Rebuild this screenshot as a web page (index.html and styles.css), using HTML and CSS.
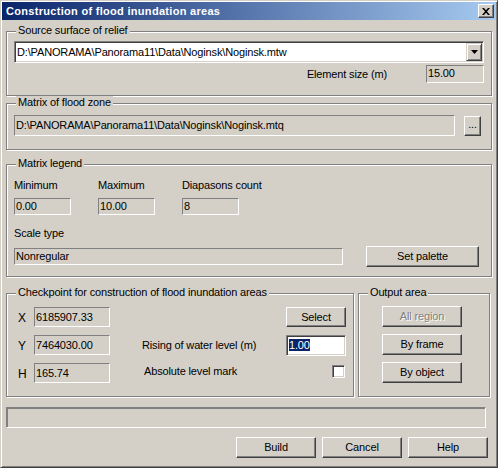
FILE: index.html
```html
<!DOCTYPE html>
<html lang="en">

<head>
    <meta charset="UTF-8">
    <title>Construction of flood inundation areas</title>
    <link rel="stylesheet" href="styles.css">
</head>

<body>
    <div class="window">
        <div class="titlebar">
            <span class="title">Construction of flood inundation areas</span>
            <span class="close-btn">
                <svg width="8" height="7" viewBox="0 0 8 7">
                    <path d="M0 0h2l2 2.2L6 0h2L5 3.5 8 7H6L4 4.8 2 7H0l3-3.5z" fill="#000"/>
                </svg>
            </span>
        </div>

        <div class="content">
            <div class="group g-source">
                <span class="group-label">Source surface of relief</span>
                <div class="combo">
                    <span class="combo-text">D:\PANORAMA\Panorama11\Data\Noginsk\Noginsk.mtw</span>
                    <span class="combo-btn">
                        <svg width="7" height="4" viewBox="0 0 7 4"><path d="M0 0h7L3.5 4z" fill="#000"/></svg>
                    </span>
                </div>
                <div class="size-row">
                    <span>Element size (m)</span>
                    <div class="field f-size">15.00</div>
                </div>
            </div>

            <div class="group g-matrix">
                <span class="group-label">Matrix of flood zone</span>
                <div class="matrix-row">
                    <div class="field f-path">D:\PANORAMA\Panorama11\Data\Noginsk\Noginsk.mtq</div>
                    <div class="btn btn-browse">...</div>
                </div>
            </div>

            <div class="group g-legend">
                <span class="group-label">Matrix legend</span>
                <div class="legend-row">
                    <div class="legend-col">
                        <div class="caption">Minimum</div>
                        <div class="field f-small">0.00</div>
                    </div>
                    <div class="legend-col">
                        <div class="caption">Maximum</div>
                        <div class="field f-small">10.00</div>
                    </div>
                    <div class="legend-col">
                        <div class="caption">Diapasons count</div>
                        <div class="field f-small">8</div>
                    </div>
                </div>
                <div class="caption scale-caption">Scale type</div>
                <div class="scale-row">
                    <div class="field f-scale">Nonregular</div>
                    <div class="btn btn-palette">Set palette</div>
                </div>
            </div>

            <div class="bottom-groups">
                <div class="group g-check">
                    <span class="group-label">Checkpoint for construction of flood inundation areas</span>
                    <div class="check-grid">
                        <span class="axis">X</span>
                        <div class="field f-coord">6185907.33</div>
                        <span></span>
                        <span></span>
                        <div class="btn btn-side">Select</div>

                        <span class="axis">Y</span>
                        <div class="field f-coord">7464030.00</div>
                        <span></span>
                        <span class="check-text">Rising of water level (m)</span>
                        <div class="edit"><span class="selected">1.00</span></div>

                        <span class="axis">H</span>
                        <div class="field f-coord">165.74</div>
                        <span></span>
                        <span class="check-text abs-text">Absolute level mark</span>
                        <span class="checkbox"></span>
                    </div>
                </div>

                <div class="group g-output">
                    <span class="group-label">Output area</span>
                    <div class="output-buttons">
                        <div class="btn btn-output disabled">All region</div>
                        <div class="btn btn-output">By frame</div>
                        <div class="btn btn-output">By object</div>
                    </div>
                </div>
            </div>

            <div class="status"></div>

            <div class="actions">
                <div class="btn btn-action">Build</div>
                <div class="btn btn-action">Cancel</div>
                <div class="btn btn-action">Help</div>
            </div>
        </div>
    </div>
</body>

</html>
```

FILE: styles.css
```css
body {
    margin: 0;
    font-family: "Liberation Sans", Arial, sans-serif;
    font-size: 11px;
    line-height: 13px;
    letter-spacing: -0.15px;
    color: #000;
    background: #d4d0c8;
}

.window {
    width: 498px;
    height: 468px;
    box-sizing: border-box;
    padding: 1px;
    background: #d4d0c8;
    border: 1px solid;
    border-color: #d4d0c8 #404040 #404040 #d4d0c8;
    box-shadow: inset 1px 1px 0 #fff, inset -1px -1px 0 #808080;
}

.titlebar {
    height: 18px;
    display: flex;
    align-items: center;
    justify-content: space-between;
    padding: 0 2px 0 4px;
    background: linear-gradient(to right, #0a246a, #a6caf0);
}

.title {
    color: #fff;
    font-weight: bold;
    letter-spacing: 0.3px;
}

.close-btn {
    width: 16px;
    height: 14px;
    box-sizing: border-box;
    display: flex;
    align-items: center;
    justify-content: center;
    background: #d4d0c8;
    border: 1px solid;
    border-color: #fff #404040 #404040 #fff;
    box-shadow: inset -1px -1px 0 #808080;
}

.content {
    padding: 0 4px;
}

/* etched group box */
.group {
    position: relative;
    box-sizing: border-box;
    border: 1px solid #808080;
    box-shadow: inset 1px 1px 0 #fff, 1px 1px 0 #fff;
}

.group-label {
    position: absolute;
    left: 9px;
    top: -8px;
    padding: 0 2px;
    background: #d4d0c8;
    white-space: nowrap;
}

/* read-only field, thin sunken */
.field {
    box-sizing: border-box;
    padding: 1px 0 0 1px;
    border: 1px solid;
    border-color: #808080 #fff #fff #808080;
    white-space: nowrap;
    overflow: hidden;
}

.btn {
    box-sizing: border-box;
    display: flex;
    align-items: center;
    justify-content: center;
    background: #d4d0c8;
    border: 1px solid;
    border-color: #fff #404040 #404040 #fff;
    box-shadow: inset -1px -1px 0 #808080;
    white-space: nowrap;
}

.btn.disabled {
    color: #808080;
    text-shadow: 1px 1px 0 #fff;
}

.g-source {
    margin-top: 11px;
    height: 65px;
    padding: 9px 0 0 7px;
}

.combo {
    width: 470px;
    height: 22px;
    box-sizing: border-box;
    display: flex;
    align-items: stretch;
    background: #fff;
    border: 1px solid;
    border-color: #808080 #fff #fff #808080;
    box-shadow: inset 1px 1px 0 #404040, inset -1px -1px 0 #d4d0c8;
    padding: 1px;
}

.combo-text {
    flex: 1;
    padding: 3px 0 0 1px;
}

.combo-btn {
    width: 16px;
    box-sizing: border-box;
    display: flex;
    align-items: center;
    justify-content: center;
    background: #d4d0c8;
    border: 1px solid;
    border-color: #d4d0c8 #404040 #404040 #d4d0c8;
    box-shadow: inset 1px 1px 0 #fff, inset -1px -1px 0 #808080;
}

.size-row {
    width: 470px;
    margin-top: 2px;
    display: flex;
    justify-content: flex-end;
    align-items: center;
    gap: 39px;
}

.f-size {
    width: 58px;
    height: 18px;
}

.g-matrix {
    margin-top: 7px;
    height: 47px;
    padding: 11px 0 0 7px;
}

.matrix-row {
    display: flex;
    align-items: center;
    gap: 9px;
}

.f-path {
    width: 441px;
    height: 21px;
    padding-top: 3px;
}

.btn-browse {
    width: 17px;
    height: 20px;
    padding-bottom: 3px;
}

.g-legend {
    margin-top: 14px;
    height: 113px;
    padding: 14px 0 0 7px;
}

.legend-row {
    display: flex;
}

.legend-col {
    width: 84px;
}

.caption {
    height: 13px;
}

.f-small {
    width: 57px;
    height: 17px;
    margin-top: 6px;
}

.scale-caption {
    margin-top: 12px;
}

.scale-row {
    margin-top: 6px;
    display: flex;
    align-items: center;
    gap: 23px;
}

.f-scale {
    width: 329px;
    height: 17px;
}

.btn-palette {
    width: 113px;
    height: 21px;
}

.bottom-groups {
    margin-top: 16px;
    display: flex;
    gap: 4px;
}

.g-check {
    width: 348px;
    height: 104px;
    padding: 13px 0 0 11px;
}

.check-grid {
    display: grid;
    grid-template-columns: 16px 76px 32px 144px 60px;
    grid-auto-rows: 20px;
    row-gap: 8px;
    align-items: center;
}

.axis {
    font-size: 12px;
    padding-top: 2px;
}

.f-coord {
    height: 20px;
    padding-top: 3px;
}

.abs-text {
    padding-left: 2px;
    margin-top: -3px;
}

.btn-side {
    height: 20px;
}

.edit {
    height: 21px;
    box-sizing: border-box;
    padding: 3px 0 0 2px;
    background: #fff;
    border: 1px solid;
    border-color: #808080 #fff #fff #808080;
    box-shadow: inset 1px 1px 0 #404040, inset -1px -1px 0 #d4d0c8;
}

.selected {
    background: #0a246a;
    color: #fff;
}

.checkbox {
    justify-self: end;
    align-self: start;
    margin: 2px 1px 0 0;
    width: 13px;
    height: 13px;
    box-sizing: border-box;
    background: #fff;
    border: 1px solid;
    border-color: #808080 #fff #fff #808080;
    box-shadow: inset 1px 1px 0 #404040, inset -1px -1px 0 #d4d0c8;
}

.g-output {
    width: 132px;
    height: 104px;
    padding: 12px 0 0 23px;
}

.output-buttons {
    display: flex;
    flex-direction: column;
    gap: 7px;
}

.btn-output {
    width: 80px;
    height: 21px;
}

.status {
    width: 480px;
    height: 21px;
    margin-top: 10px;
    box-sizing: border-box;
    border: 1px solid;
    border-color: #808080 #fff #fff #808080;
    box-shadow: inset 1px 1px 0 #808080, inset -1px -1px 0 #d4d0c8;
}

.actions {
    margin-top: 9px;
    display: flex;
    justify-content: flex-end;
    gap: 6px;
    padding-right: 4px;
}

.btn-action {
    width: 80px;
    height: 21px;
}
```
